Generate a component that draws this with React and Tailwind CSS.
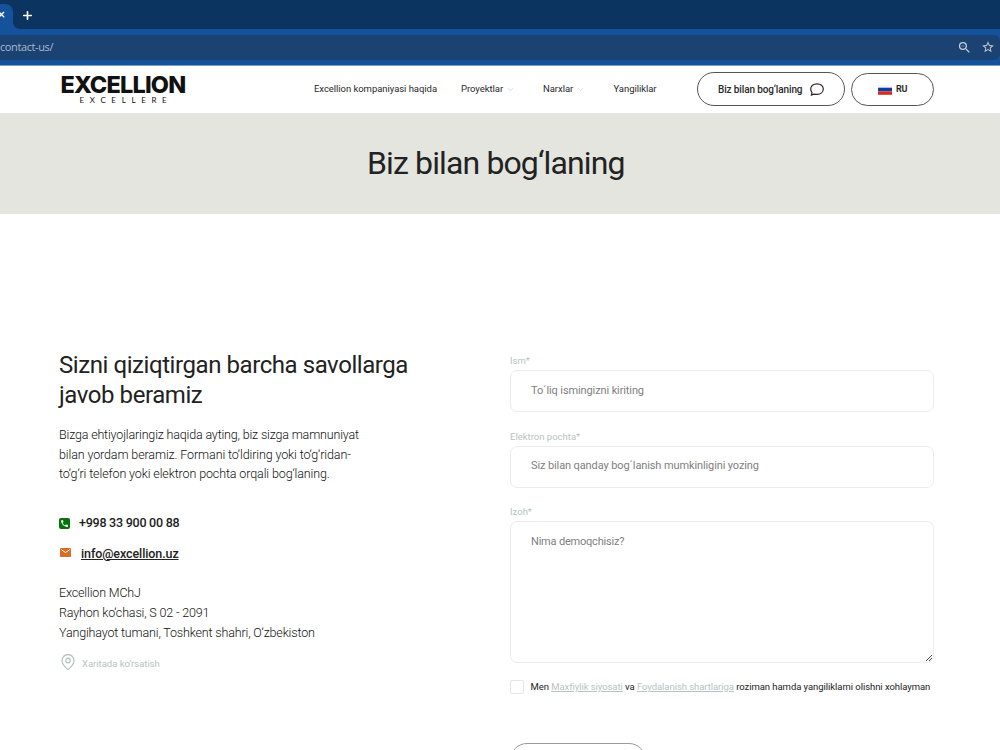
import { ChevronDown, MapPin, Plus, X } from 'lucide-react';
import { MdLocalPhone, MdOutlineStarBorder, MdOutlineZoomOut } from 'react-icons/md';

const contactLines = ['Excellion MChJ', 'Rayhon ko‘chasi, S 02 - 2091', 'Yangihayot tumani, Toshkent shahri, O‘zbekiston'];

function BrowserBar() {
  return (
    <div className="h-[66px] bg-[#14539c] border-b border-[#7b9fc9]">
      <div className="h-[30px] bg-[#14539c]">
        <div className="h-[29px] flex bg-[#0b3560]">
          {/* Active tab */}
          <div className="w-[13px] h-[25px] mt-1 bg-[#14539c] rounded-tr-lg pt-[6px] relative">
            <X className="w-[9px] h-[9px] -ml-[3px] text-white" strokeWidth={3.5} />
            <svg className="absolute left-[13px] bottom-0 w-[7px] h-[7px]" viewBox="0 0 7 7">
              <path d="M0 0A7 7 0 0 0 7 7H0Z" fill="#14539c" />
            </svg>
          </div>
          <Plus className="w-[13px] h-[13px] mt-[9px] ml-2 text-white" strokeWidth={3} />
        </div>
      </div>
      <div className="mt-[5px] h-[25px] bg-[#1a4273] rounded-r-[6px] flex items-center text-[#a9b9cc]">
        <span className="text-[11px] leading-none font-['Open_Sans',sans-serif] tracking-[-0.4px] -mt-[2px]">contact-us/</span>
        <MdOutlineZoomOut className="w-[15px] h-[15px] -mt-px ml-auto text-[#c6ccd2]" />
        <MdOutlineStarBorder className="w-[14px] h-[14px] -mt-px ml-[9px] mr-[5px] text-[#c6ccd2]" />
      </div>
    </div>
  );
}

function Header() {
  return (
    <header className="h-[47px] flex bg-white text-[#2a2a2a]">
      {/* Logo */}
      <div className="w-[126px] ml-[60.500px] pt-[9px] text-[#111]">
        <div className="font-[Inter,sans-serif] font-extrabold text-[23.500px] leading-[20px] tracking-[-0.8px] whitespace-nowrap">EXCELLION</div>
        <div className="pl-[19px] font-[Lato,sans-serif] text-[8px] leading-[10px] tracking-[5.650px] whitespace-nowrap">EXCELLERE</div>
      </div>
      <nav className="ml-[127.500px] w-[383px] h-[47px] flex items-center text-[9.500px] tracking-[-0.05px] whitespace-nowrap">
        <a className="w-[147px]">Excellion kompaniyasi haqida</a>
        <a className="w-[82px] flex items-center">Proyektlar<ChevronDown className="w-[9px] h-[9px] ml-[3px] text-gray-300" /></a>
        <a className="w-[70.500px] flex items-center">Narxlar<ChevronDown className="w-[9px] h-[9px] ml-[3px] text-gray-300" /></a>
        <a>Yangiliklar</a>
      </nav>
      <button className="mt-[6px] w-[148px] h-[34px] rounded-full border border-[#55555f] flex items-center pl-5 text-[10px] tracking-[-0.13px] font-medium whitespace-nowrap">
        <span className="w-[92px] text-left">Biz bilan bog‘laning</span>
        <svg className="w-[14px] h-[13px]" viewBox="0 0 14 13" fill="none" stroke="#35232b" strokeWidth="1.2">
          <path d="M4 11.1 1.4 12 2 9.4C1.1 8.4.7 7.3.7 6.1.7 3 3.3.8 7 .8s6.3 2.2 6.3 5.3S10.700 11.400 7 11.400c-1.100 0-2.100-.1-3-.3Z" />
        </svg>
      </button>
      <button className="mt-[7px] ml-[6px] w-[83px] h-[33px] rounded-full border border-[#55555f] flex items-center pl-[26px] text-[9px] tracking-[-0.2px] font-bold">
        <svg className="w-[14px] h-[10px] mr-[4px]" viewBox="0 0 14 10">
          <path fill="#f7f7f7" d="M0 0h14v2.700H0z" />
          <path fill="#0b3fa8" d="M0 2.700h14v3.600H0z" />
          <path fill="#dc2a20" d="M0 6.300h14v3.500H0z" />
        </svg>
        RU
      </button>
    </header>
  );
}

function Field({ label, placeholder }) {
  return (
    <label className="block h-[75.500px]">
      <span className="block h-[15px] text-[9.500px] leading-[12px] text-[#b6c4c1]">{label}</span>
      <span className="h-[42px] border border-[#ececec] rounded-[7px] flex items-center pl-5 text-[11px] tracking-[-0.11px] text-[#808080] whitespace-nowrap">{placeholder}</span>
    </label>
  );
}

export default function App() {
  return (
    <div className="w-[1000px] h-[750px] overflow-hidden bg-white font-[Roboto,sans-serif]">
      <BrowserBar />
      <Header />
      <section className="h-[101px] bg-[#e5e5e0] pt-[31px] pl-[367px]">
        <h1 className="text-[32px] leading-[38px] tracking-[-0.87px] text-[#222] whitespace-nowrap">Biz bilan bog‘laning</h1>
      </section>

      <main className="flex pt-[136px] pl-[59px]">
        <div className="w-[451px] text-[#222]">
          <h2 className="pt-px text-[24px] leading-[29.500px] tracking-[-0.43px] whitespace-nowrap">Sizni qiziqtirgan barcha savollarga<br />javob beramiz</h2>
          <p className="mt-[15px] text-[12.500px] font-light leading-[19.500px] tracking-[-0.17px] text-[#111] whitespace-nowrap">
            Bizga ehtiyojlaringiz haqida ayting, biz sizga mamnuniyat<br />
            <span className="tracking-[-0.12px]">
              bilan yordam beramiz. Formani to‘ldiring yoki to‘g‘ridan-<br />
              to‘g‘ri telefon yoki elektron pochta orqali bog‘laning.
            </span>
          </p>
          <div className="mt-[30px] h-[20px] flex items-center text-[12.500px] tracking-[-0.25px] font-medium">
            <span className="w-[11px] h-[11px] rounded-[2px] bg-[#08710f] flex items-center justify-center mr-[9px]">
              <MdLocalPhone className="w-[9px] h-[9px] text-white" />
            </span>
            +998 33 900 00 88
          </div>
          <div className="mt-[10px] h-[20px] flex items-center text-[12.500px] font-medium">
            <svg className="w-[11px] h-[9px] ml-px mr-[10px] mb-[3px]" viewBox="0 0 11 9">
              <rect width="11" height="9" rx="1" fill="#d96b24" />
              <path d="M1 1.500 5.500 4.500 10 1.500" fill="none" stroke="#fff" />
            </svg>
            <a className="mt-px underline tracking-[-0.1px]">info@excellion.uz</a>
          </div>
          <div className="mt-[19px] text-[12.500px] font-light leading-[20px] tracking-[-0.16px] text-[#111] whitespace-nowrap">
            {contactLines.map((line) => <p key={line}>{line}</p>)}
          </div>
          <div className="mt-[10px] flex items-center text-[9.500px] tracking-[-0.02px] text-[#b6c4c1]">
            <MapPin className="w-[18px] h-[18px] mr-[5px]" strokeWidth={1.7} />
            <span className="mt-[4px]">Xaritada ko‘rsatish</span>
          </div>
        </div>

        <form className="w-[424px] pt-[5px]">
          <Field label="Ism*" placeholder="To´liq ismingizni kiriting" />
          <Field label="Elektron pochta*" placeholder="Siz bilan qanday bog´lanish mumkinligini yozing" />
          <div className="h-[15px] text-[9.500px] leading-[12px] text-[#b6c4c1]">Izoh*</div>
          <div className="relative h-[142px] border border-[#ececec] rounded-[7px] pl-5 pt-[12px] text-[11px] leading-[16px] tracking-[-0.2px] text-[#808080]">
            Nima demoqchisiz?
            <svg className="absolute right-[1px] bottom-[1px] w-[6px] h-[6px]" viewBox="0 0 6 6" stroke="#444">
              <path d="M0 6 6 0M3 6 6 3" />
            </svg>
          </div>
          <div className="mt-[17px] h-[14px] flex items-center text-[9.500px] tracking-[-0.06px] text-[#222] whitespace-nowrap">
            <span className="w-[14px] h-[14px] shrink-0 border border-[#e5e5e5] rounded-[2px] mr-[6.500px]" />
            <span>Men <a className="underline text-[#b6c4c1]">Maxfiylik siyosati</a> va <a className="underline text-[#b6c4c1]">Foydalanish shartlariga</a> roziman hamda yangiliklarni olishni xohlayman</span>
          </div>
          <div className="mt-[49px] w-[136px] h-[34px] rounded-full border border-[#999]" />
        </form>
      </main>
    </div>
  );
}
